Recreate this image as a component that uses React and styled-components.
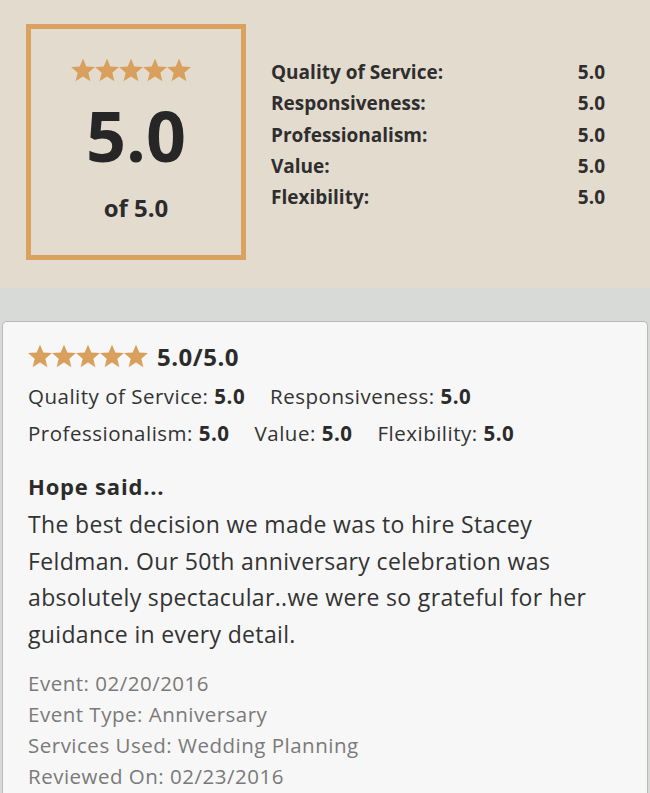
import styled, { createGlobalStyle } from "styled-components";

const GlobalStyle = createGlobalStyle`
  html, body {
    margin: 0;
    padding: 0;
    background: #d8dad7;
  }
  body {
    font-family: "Open Sans", Lato, sans-serif;
    color: #2b2b2b;
  }
`;

const STAR_POINTS =
  "12,0.4 15.29,8.47 23.98,9.11 17.33,14.73 19.41,23.19 12,18.6 4.59,23.19 6.67,14.73 0.02,9.11 8.71,8.47";

const Stars = ({ size = 24, className }) => (
  <StarRow className={className}>
    {[0, 1, 2, 3, 4].map((i) => (
      <svg key={i} width={size} height={size} viewBox="0 0 24 24">
        <polygon points={STAR_POINTS} fill="#d9a05d" />
      </svg>
    ))}
  </StarRow>
);

const scores = [
  ["Quality of Service:", "5.0"],
  ["Responsiveness:", "5.0"],
  ["Professionalism:", "5.0"],
  ["Value:", "5.0"],
  ["Flexibility:", "5.0"],
];

const App = () => {
  return (
    <Page>
      <GlobalStyle />
      <Summary>
        <ScoreBox>
          <BoxStars />
          <BigScore>5.0</BigScore>
          <OutOf>of 5.0</OutOf>
        </ScoreBox>
        <Breakdown>
          {scores.map(([label, value]) => (
            <BreakdownRow key={label}>
              <span>{label}</span>
              <span>{value}</span>
            </BreakdownRow>
          ))}
        </Breakdown>
      </Summary>
      <Gap />
      <ReviewCard>
        <RatingLine>
          <Stars />
          <RatingText>5.0/5.0</RatingText>
        </RatingLine>
        <SubScores>
          <SubScore>
            Quality of Service: <b>5.0</b>
          </SubScore>
          <SubScore>
            Responsiveness: <b>5.0</b>
          </SubScore>
          <SubScore>
            Professionalism: <b>5.0</b>
          </SubScore>
          <SubScore>
            Value: <b>5.0</b>
          </SubScore>
          <SubScore>
            Flexibility: <b>5.0</b>
          </SubScore>
        </SubScores>
        <Author>Hope said...</Author>
        <Body>
          The best decision we made was to hire Stacey Feldman. Our 50th
          anniversary celebration was absolutely spectacular..we were so
          grateful for her guidance in every detail.
        </Body>
        <Meta>
          <div>Event: 02/20/2016</div>
          <div>Event Type: Anniversary</div>
          <div>Services Used: Wedding Planning</div>
          <div>Reviewed On: 02/23/2016</div>
        </Meta>
      </ReviewCard>
    </Page>
  );
};

const Page = styled.div`
  width: 650px;
  height: 793px;
  overflow: hidden;
  background: #d8dad7;
`;

const Summary = styled.section`
  background: #e4dbcf;
  height: 288px;
  padding: 24px 0 0 26px;
  box-sizing: border-box;
  display: flex;
  align-items: flex-start;
`;

const ScoreBox = styled.div`
  width: 220px;
  height: 236px;
  box-sizing: border-box;
  border: 5px solid #d9a35f;
  display: flex;
  flex-direction: column;
  align-items: center;
  padding-top: 29px;
`;

const StarRow = styled.div`
  display: flex;
  svg {
    display: block;
  }
`;

const BoxStars = styled(Stars)`
  margin-right: 11px;
`;

const BigScore = styled.div`
  font-size: 70px;
  font-weight: 700;
  line-height: 1;
  margin-top: 18px;
  color: #262626;
`;

const OutOf = styled.div`
  font-size: 24px;
  font-weight: 700;
  line-height: 1;
  margin-top: 26px;
  color: #2b2b2b;
`;

const Breakdown = styled.div`
  margin-left: 25px;
  margin-top: 33px;
  width: 334px;
`;

const BreakdownRow = styled.div`
  display: flex;
  justify-content: space-between;
  font-size: 19px;
  font-weight: 700;
  line-height: 31.3px;
  color: #2e2e2e;
`;

const Gap = styled.div`
  height: 33px;
`;

const ReviewCard = styled.article`
  margin: 0 2px;
  background: #f7f7f7;
  border: 1px solid #b9b9b9;
  border-bottom: none;
  border-radius: 5px 5px 0 0;
  padding: 19px 25px 0;
  height: 472px;
  box-sizing: border-box;
`;

const RatingLine = styled.div`
  display: flex;
  align-items: center;
  gap: 9px;
  height: 30px;
`;

const RatingText = styled.span`
  font-size: 24px;
  font-weight: 700;
  letter-spacing: 0.5px;
  color: #2b2b2b;
`;

const SubScores = styled.div`
  display: flex;
  flex-wrap: wrap;
  column-gap: 25px;
  width: 500px;
  margin-top: 7px;
`;

const SubScore = styled.span`
  font-size: 20.5px;
  letter-spacing: 0.5px;
  line-height: 37px;
  color: #333;
  b {
    font-weight: 700;
    color: #2b2b2b;
  }
`;

const Author = styled.div`
  font-size: 22px;
  font-weight: 700;
  letter-spacing: 0.8px;
  margin-top: 19px;
  line-height: 30px;
  color: #2b2b2b;
`;

const Body = styled.p`
  margin: 5px 0 0;
  font-size: 23px;
  letter-spacing: 0.35px;
  line-height: 36.5px;
  color: #333;
  width: 600px;
`;

const Meta = styled.div`
  margin-top: 16px;
  font-size: 20.5px;
  letter-spacing: 0.5px;
  line-height: 31px;
  color: #7a7a7a;
`;

export default App;
